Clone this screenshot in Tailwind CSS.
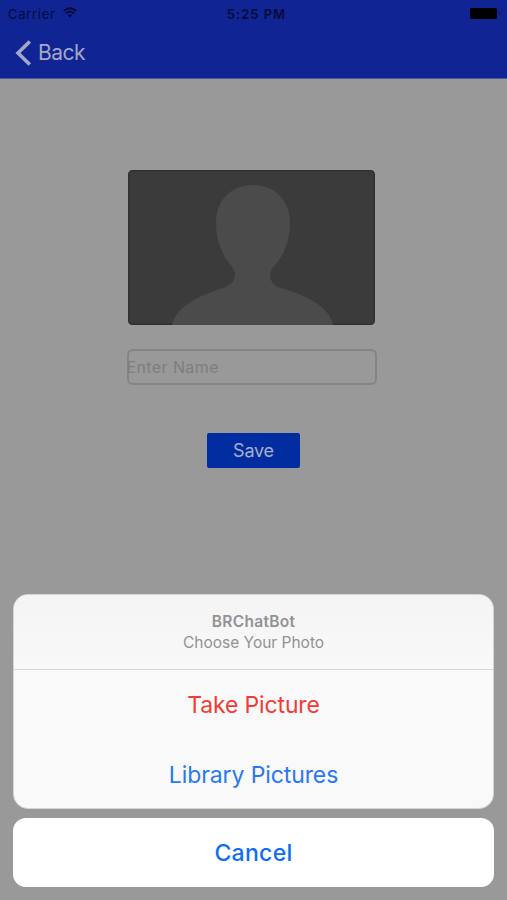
<!DOCTYPE html>
<html lang="en">
<head>
<meta charset="utf-8">
<title>BRChatBot</title>
<script src="https://cdn.jsdelivr.net/npm/@tailwindcss/browser@4"></script>
</head>
<body class="bg-[#999999] font-['Inter',sans-serif]">
<div class="flex h-[900px] w-[507px] flex-col overflow-hidden">
  <header class="h-[79px] shrink-0 border-b border-[#4c5798] bg-[#112494]">
    <div class="grid h-7 grid-cols-3 items-center pl-2 pr-[6px] text-[#050b38]">
      <div class="flex items-center gap-[7px]">
        <span class="pt-px text-[13px] tracking-[0.7px]">Carrier</span>
        <svg class="mb-[3px] h-[11px] w-[14px]" viewBox="0 0 14 11" fill="none" stroke="currentColor" stroke-width="1.8"><path d="M.7 4Q7-1.6 13.3 4M3 6.5Q7 3 11 6.5"/><path d="M4.8 8.2Q7 6.5 9.2 8.2L7 10.6Z" fill="currentColor" stroke="none"/></svg>
      </div>
      <span class="pl-1 pt-px text-center text-[13px] font-semibold tracking-[1px]">5:25 PM</span>
      <svg class="mb-px h-[11px] w-[31px] justify-self-end" viewBox="0 0 31 11"><rect width="27" height="11" rx="1.5" fill="#000"/><path d="M29 3.5Q31 5.5 29 7.500Z" fill="#080f55"/></svg>
    </div>
    <div class="flex h-12 items-center pt-px pl-[15px] text-[#a3a7c8]">
      <svg class="h-[26px] w-[17px]" viewBox="0 0 17 26" fill="none" stroke="currentColor" stroke-width="3.6"><path d="M14.800 1.500L3 13L14.800 24.500"/></svg>
      <span class="ml-[6px] text-[21px] tracking-[-0.5px]">Back</span>
    </div>
  </header>
  <main class="flex flex-col items-center">
    <svg class="mt-[91px] mr-[4px] h-[155px] w-[247px]" viewBox="0 0 247 155">
      <rect x=".75" y=".75" width="245.500" height="153.500" rx="3.500" fill="#3b3b3b" stroke="#303030" stroke-width="1.500"/>
      <path d="M44 155C48 138 66 127 98 117Q107 112 107 105Q107 99 101 93Q88 76 88 53C88 30 103 15 125 15C148 15 162 32 162 53Q162 76 149 93Q142 99 142 105Q142 112 149 117C179 125 201 136 205 155Z" fill="#4b4b4b"/>
    </svg>
    <div class="mt-6 mr-[4px] flex h-9 w-[250px] items-center rounded-[6px] border-2 border-[#848484] text-[16px] tracking-[0.4px] text-[#7e7e7e]"><span class="-ml-[2px]">Enter Name</span></div>
    <div class="mt-[48px] flex h-[35px] w-[93px] items-center justify-center rounded-[2px] bg-[#022da0] text-[18px] tracking-[-0.2px] text-[#a6afcd]">Save</div>
  </main>
  <div class="mx-[13px] mt-auto mb-[13px] flex flex-col gap-[9px] text-center">
    <section class="h-[215px] overflow-hidden rounded-[15px] border border-[#d5d5d5] bg-[#f9f9f9]">
      <div class="flex h-[75px] flex-col items-center border-b border-[#d8d8d8] bg-linear-to-b from-[#f4f4f4] to-[#f9f9f9] pt-4 text-[#929292]">
        <h1 class="text-[15.500px] leading-[21px] font-semibold tracking-[0.3px]">BRChatBot</h1>
        <p class="text-[15.500px] leading-[22px]">Choose Your Photo</p>
      </div>
      <div class="flex h-[70px] items-center justify-center pt-px text-[23px] tracking-[-0.15px] text-[#f23b35]">Take Picture</div>
      <div class="flex h-[69px] items-center justify-center pt-[2px] text-[23px] tracking-[-0.1px] text-[#2878f0]">Library Pictures</div>
    </section>
    <div class="flex h-[69px] items-center justify-center rounded-[13px] bg-white pt-[2px] text-[23px] font-medium tracking-[0.3px] text-[#0f6df2]">Cancel</div>
  </div>
</div>
</body>
</html>
